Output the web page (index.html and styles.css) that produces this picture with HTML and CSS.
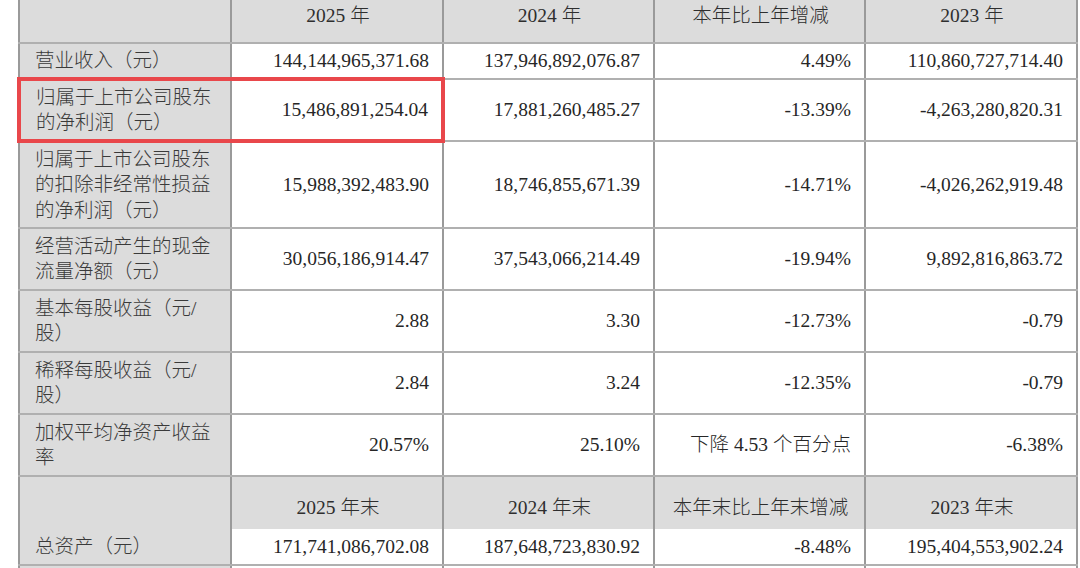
FILE: index.html
```html
<!DOCTYPE html>
<html lang="zh-CN">
<head>
<meta charset="utf-8">
<title>主要会计数据</title>
<link rel="stylesheet" href="styles.css">
</head>
<body>
<div class="page">
<table class="fin">
  <colgroup>
    <col class="c1"><col class="c2"><col class="c3"><col class="c4"><col class="c5">
  </colgroup>
  <tr class="head head-top">
    <td class="label"></td>
    <td>2025 年</td>
    <td>2024 年</td>
    <td>本年比上年增减</td>
    <td>2023 年</td>
  </tr>
  <tr class="h1">
    <td class="label">营业收入（元）</td>
    <td class="num">144,144,965,371.68</td>
    <td class="num">137,946,892,076.87</td>
    <td class="num">4.49%</td>
    <td class="num">110,860,727,714.40</td>
  </tr>
  <tr class="h2 hl">
    <td class="label hl-l">归属于上市公司股东<br>的净利润（元）</td>
    <td class="num hl-r">15,486,891,254.04</td>
    <td class="num">17,881,260,485.27</td>
    <td class="num">-13.39%</td>
    <td class="num">-4,263,280,820.31</td>
  </tr>
  <tr class="h3">
    <td class="label">归属于上市公司股东<br>的扣除非经常性损益<br>的净利润（元）</td>
    <td class="num">15,988,392,483.90</td>
    <td class="num">18,746,855,671.39</td>
    <td class="num">-14.71%</td>
    <td class="num">-4,026,262,919.48</td>
  </tr>
  <tr class="h2">
    <td class="label">经营活动产生的现金<br>流量净额（元）</td>
    <td class="num">30,056,186,914.47</td>
    <td class="num">37,543,066,214.49</td>
    <td class="num">-19.94%</td>
    <td class="num">9,892,816,863.72</td>
  </tr>
  <tr class="h2">
    <td class="label">基本每股收益（元/<br>股）</td>
    <td class="num">2.88</td>
    <td class="num">3.30</td>
    <td class="num">-12.73%</td>
    <td class="num">-0.79</td>
  </tr>
  <tr class="h2">
    <td class="label">稀释每股收益（元/<br>股）</td>
    <td class="num">2.84</td>
    <td class="num">3.24</td>
    <td class="num">-12.35%</td>
    <td class="num">-0.79</td>
  </tr>
  <tr class="h2">
    <td class="label">加权平均净资产收益<br>率</td>
    <td class="num">20.57%</td>
    <td class="num">25.10%</td>
    <td class="num">下降 4.53 个百分点</td>
    <td class="num">-6.38%</td>
  </tr>
  <tr class="head head-mid">
    <td class="label"></td>
    <td>2025 年末</td>
    <td>2024 年末</td>
    <td>本年末比上年末增减</td>
    <td>2023 年末</td>
  </tr>
  <tr class="h1 after-head">
    <td class="label">总资产（元）</td>
    <td class="num">171,741,086,702.08</td>
    <td class="num">187,648,723,830.92</td>
    <td class="num">-8.48%</td>
    <td class="num">195,404,553,902.24</td>
  </tr>
  <tr class="h2">
    <td class="label"></td>
    <td class="num"></td>
    <td class="num"></td>
    <td class="num"></td>
    <td class="num"></td>
  </tr>
</table>
</div>
</body>
</html>
```

FILE: styles.css
```css
html, body {
  margin: 0;
  padding: 0;
  background: #ffffff;
}

.page {
  padding: 0 0 0 17px;
  height: 568px;
  overflow: hidden;
}

.fin {
  border-collapse: collapse;
  table-layout: fixed;
  width: 1058px;
  font-family: "Liberation Serif", "Noto Sans CJK SC", serif;
  font-size: 19.5px;
  font-weight: 300;
  line-height: 25.5px;
  color: #262626;
}

.c1, .c2, .c5 { width: 212px; }
.c3, .c4 { width: 211px; }

.fin td {
  border-left: 2px solid #9a9a9a;
  border-right: 2px solid #9a9a9a;
  border-top: 2px solid #b0b0b0;
  border-bottom: 2px solid #b0b0b0;
  padding: 0 13px 0 15px;
  vertical-align: middle;
  white-space: nowrap;
}

.fin td.label {
  background: #dcdcdc;
  color: #3a3a3a;
  text-align: left;
}

.fin td.num {
  text-align: right;
}

.head td {
  background: #dcdcdc;
  text-align: center;
  color: #2e2e2e;
}

.head-top { height: 43px; }
.head-top td {
  border-top: none;
  padding-bottom: 10px;
}

.head-mid { height: 53px; }
.head-mid td {
  padding-top: 10px;
  border-bottom: none;
}

.after-head td { border-top: none; }

.h1 { height: 36px; }
.h2 { height: 62px; }
.h3 { height: 87px; }

.fin td.hl-l {
  border-left: 4px solid #e9474b;
  border-top: 4px solid #e9474b;
  border-bottom: 4px solid #e9474b;
}

.fin td.hl-r {
  border-right: 4px solid #e9474b;
  border-top: 4px solid #e9474b;
  border-bottom: 4px solid #e9474b;
}
```
